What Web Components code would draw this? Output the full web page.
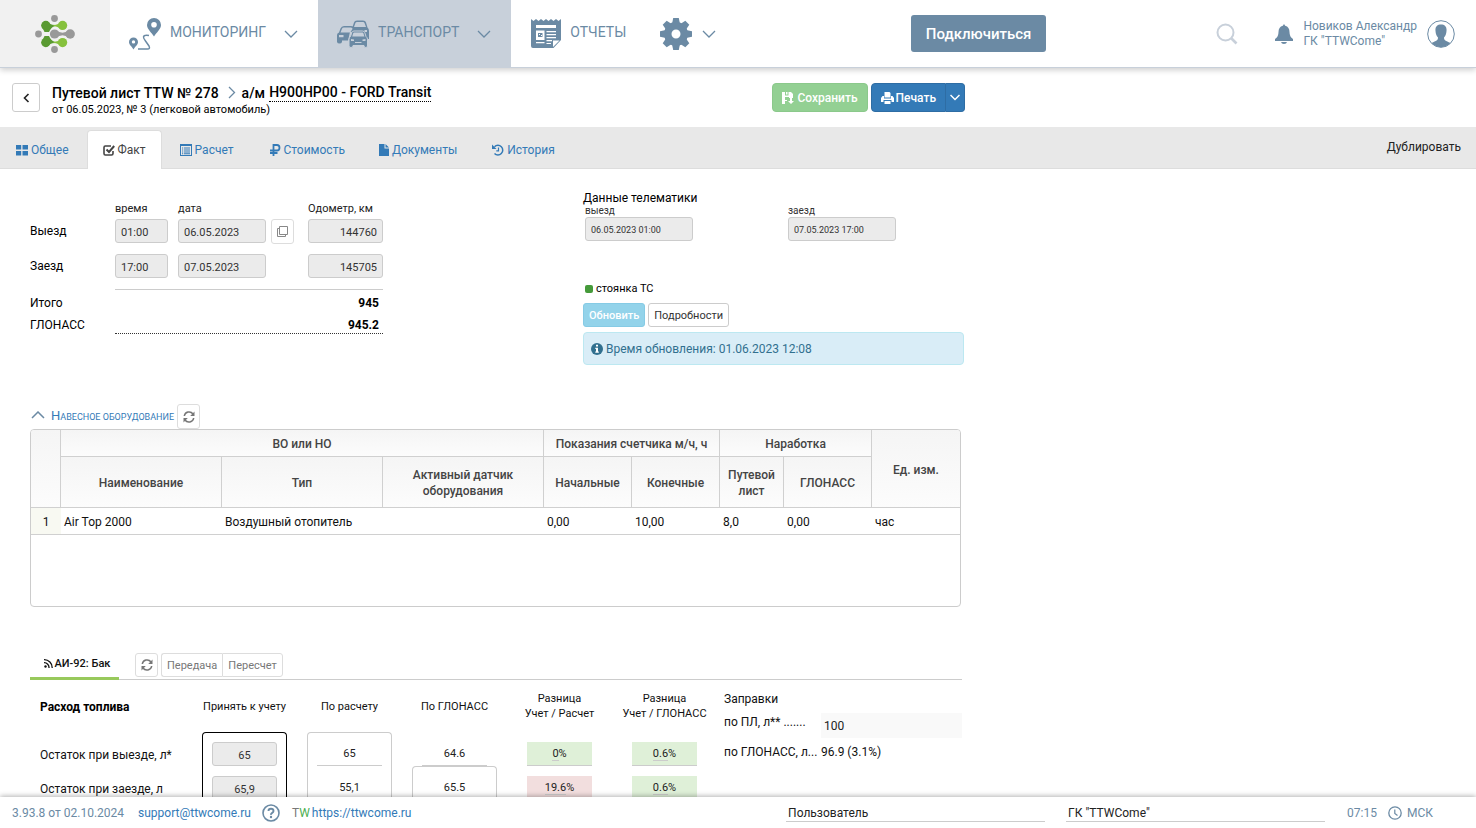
<!DOCTYPE html>
<html lang="ru">
<head>
<meta charset="utf-8">
<title>Путевой лист TTW № 278</title>
<style>
  body { margin: 0; font: 12px/16px Roboto, "Liberation Sans", sans-serif; color: #000; background: #fff; }
</style>
</head>
<body>
<waybill-app></waybill-app>
<script>
const RESET = `
  *, *::before, *::after { box-sizing: border-box; }
  a { color: #337ab7; text-decoration: none; }
  button, input { font: inherit; margin: 0; }
  button { cursor: pointer; }
  input { min-width: 0; }
  .field { height: 24px; width: 100%; padding: 2px 5px 0; border: 1px solid #ccc; border-radius: 3px; background: #ebebeb; color: #333; }
  .btn { display: inline-flex; align-items: center; justify-content: center; height: 24px; padding: 1px 5px 0; border: 1px solid #ccc; border-radius: 3px; background: #fff; color: #333; white-space: nowrap; }
  .soft { border-color: #ddd; color: #777; }
`;

const define = (name, css, html) => {
  const template = document.createElement('template');
  template.innerHTML = `<style>${RESET}${css}</style>${html}`;
  customElements.define(name, class extends HTMLElement {
    constructor() {
      super();
      this.attachShadow({ mode: 'open' }).append(template.content.cloneNode(true));
    }
  });
};

/* name: [width, height, viewBox, markup] */
const ICONS = {
  logo: [40, 38, '0 0 40 38', `
    <g fill="#999"><circle cx="19.500" cy="3.500" r="3.400"/><circle cx="3.500" cy="19" r="3.400"/><circle cx="19.500" cy="34.500" r="3.400"/>
    <circle cx="19.500" cy="19" r="4.600"/><circle cx="35.200" cy="19" r="4.700"/><path d="M21 14.800q6.500 6 13 0v8.400q-6.500-6-13 0z"/></g>
    <g fill="#5a9a32"><circle cx="10.800" cy="10.400" r="4.600"/><circle cx="10.800" cy="27.600" r="4.600"/>
    <path d="M12 6.200q3 3.600 7.500 3.800v1.200q-3.500 1-5.500 5.800h-4.500L6.200 10z"/><path d="M12 31.800q3-3.600 7.500-3.800v-1.200q-3.500-1-5.500-5.800h-4.500L6.200 28z"/></g>
    <g fill="#86c13d"><circle cx="27.600" cy="10.400" r="4.600"/><circle cx="27.600" cy="27.600" r="4.600"/>
    <path d="M26.500 6q-3 4-8 4v1.200q5 0 8 3.600z"/><path d="M26.500 32q-3-4-8-4v-1.200q5 0 8-3.600z"/></g>`],
  route: [32, 32, '0 0 32 32', `<path fill="currentColor" fill-rule="evenodd" d="M25 0a7 7 0 0 1 7 7c0 4-4.500 7.500-7 11.500C22.500 14.500 18 11 18 7a7 7 0 0 1 7-7zm0 4a2.800 2.800 0 1 0 0 5.600A2.800 2.800 0 0 0 25 4z"/>
    <path fill="currentColor" fill-rule="evenodd" d="M4.500 19.500A4.500 4.500 0 0 1 9 24c0 3-3 4.500-4.500 7.500C3 28.500 0 27 0 24a4.500 4.500 0 0 1 4.500-4.500zm0 2.700a1.700 1.700 0 1 0 0 3.400 1.700 1.700 0 0 0 0-3.400z"/>
    <path d="M20 17.500q-5-1-5.500 1.500-.2 1 2 4l3.500 5q1.500 3-1.500 3H9" fill="none" stroke="currentColor" stroke-width="1.500"/>`],
  cars: [32, 28, '0 0 32 28', `
    <g fill="currentColor"><path d="M15 8.500 17 2.500Q17.500.600 20 .500h6q2.500 0 3 2l1.500 5Q32 8.500 32 11v8h-4l-4.500-7H14z"/>
    <path d="M0 22V15q0-2 2-2.500l1.500-4Q4.500 6 7 6h7q3 0 3 2.500l-4 3.500-2 8.500H5V22q-.5 1.500-2.500 1.500T0 22z"/></g>
    <g fill="#c8d0da"><path d="M17 7l1.500-4.200Q18.800 2 20 2h6q1.200 0 1.500 1L29 7z"/><path d="M3.500 12.500 5 8.700Q5.300 7.500 7 7.500h7q1.500 0 1.500 1.500L13 12.500z"/><path d="M2 15h4.500v2.300H2zM27.500 10H30v2h-2.500z"/></g>
    <path d="M12 26v-6.500q0-2 1.500-3l1.200-3.800q.5-1.700 2.300-1.700h8.500q1.800 0 2.300 1.700l1.200 3.800q1.500 1 1.500 3V26q0 1.500-1.700 1.500T27 26v-.5H16V26q0 1.500-2 1.500T12 26z" fill="currentColor" stroke="#c8d0da"/>
    <path d="M15.200 16.500l1-3.200q.2-.8 1-.8h8.200q.8 0 1 .8l1 3.200zM14 19l3 .5v1.500h-3zM28.500 19l-3 .5v1.500h3zM18 22h6.500v1H18z" fill="#c8d0da"/>`],
  news: [30, 29, '0 0 30 29', `<path fill="currentColor" d="M0 0 2.500 2 5 0l2.500 2L10 0l2.500 2L15 0l2.500 2L20 0l2.500 2L25 0l2.500 2L30 0v21l-7.500 8H2q-2 0-2-2z"/>
    <path fill="#fff" d="M5 6h20v3H5zM5 11.500h8.500V21H5zM15.500 12h9.500v1.200h-9.500zM15.500 15h9.500v1.200h-9.500zM15.500 18h9.500v1.200h-9.500zM15.500 21H21v1.200h-5.500zM5 23h8.500v1.200H5zM15.500 24H20v1h-4.500z"/><path fill="#fff" d="M22 28v-6.500h6.500z"/>
    <path fill="currentColor" d="M7 14h4.500v4H7z"/><path fill="#fff" d="M8 15h1v1H8zM10 16h1v1h-1z"/>`],
  gear: [32, 32, '-16 -16 32 32', `<circle r="8.200" fill="none" stroke="currentColor" stroke-width="7.400"/><g fill="currentColor">${[0, 45, 90, 135, 180, 225, 270, 315].map(a => `<path transform="rotate(${a})" d="M-4-10 -2.800-16H2.800L4-10z"/>`).join('')}</g>`],
  down: [14, 8, '0 0 14 8', `<path d="M1 1l6 6 6-6" fill="none" stroke="currentColor" stroke-width="1.300"/>`],
  up: [14, 8, '0 0 14 8', `<path d="M1 7l6-6 6 6" fill="none" stroke="currentColor" stroke-width="1.500"/>`],
  downwhite: [10, 7, '0 0 10 7', `<path d="M.5 1 5 5.500 9.500 1" fill="none" stroke="currentColor" stroke-width="1.500"/>`],
  right: [8, 13, '0 0 8 13', `<path d="M1 1l5.500 5.500L1 12" fill="none" stroke="currentColor" stroke-width="1.300"/>`],
  back: [7, 10, '0 0 7 10', `<path d="M5.500 1 1.500 5l4 4" fill="none" stroke="currentColor" stroke-width="1.600"/>`],
  search: [22, 22, '0 0 22 22', `<circle cx="9.500" cy="9.500" r="8" fill="none" stroke="currentColor" stroke-width="2"/><path d="M15 15l5.500 5.500" stroke="currentColor" stroke-width="2.600"/>`],
  bell: [18, 20, '0 0 18 20', `<path fill="currentColor" d="M9 0l1.200 1.800Q14.500 3 14.500 8q0 5 3.500 7v2H0v-2q3.500-2 3.500-7 0-5 4.300-6.200zM6 18h6q-.5 2-3 2t-3-2z"/>`],
  avatar: [28, 28, '0 0 28 28', `<circle cx="14" cy="14" r="13.300" fill="none" stroke="currentColor"/><path fill="currentColor" d="M14 4.500c4 0 6 2.500 5.500 6.500-.2 3-1 5-2.500 6.500 0 3 1.500 3 6.500 5.500A13 13 0 0 1 4.500 23c5-2.500 6.500-2.500 6.500-5.500C9.500 16 8.700 14 8.500 11 8 7 10 4.500 14 4.500z"/>`],
  save: [12, 12, '0 0 12 12', `<path fill="currentColor" fill-rule="evenodd" d="M0 0h3v3.500h3.500V0H9l2 2v4H7V5H3v3h2v1H3v3H0zM4 0h1.500v2.500H4z"/><path fill="currentColor" d="M8 6h2v3h2l-3 3-3-3h2z"/>`],
  print: [13, 12, '0 0 13 12', `<path fill="currentColor" d="M3.500 0h5L9.500 1v4.500h-6zM1.500 4H3v2.500h7V4h1.500L13 6v4h-2.500V8h-8v2H0V6zM3.500 9h6v3h-6z"/>`],
  grid: [12, 12, '0 0 12 12', `<path fill="currentColor" d="M0 1h5.200v4.500H0zM6.500 1H12v4.500H6.500zM0 7h5.200v4.500H0zM6.500 7H12v4.500H6.500z"/>`],
  check: [12, 12, '0 0 12 12', `<path d="M10 7v2.500q0 1.500-1.500 1.500H2.300Q1 11 1 9.500v-6Q1 2 2.300 2H8" fill="none" stroke="currentColor" stroke-width="1.600"/><path d="M3.500 5.500 6 8l5.200-6" fill="none" stroke="currentColor" stroke-width="2"/>`],
  calc: [12, 12, '0 0 12 12', `<path fill="currentColor" fill-rule="evenodd" d="M0 0h12v12H0zm1 2v9h10V2z"/><path fill="currentColor" d="M2 3.500h1.200v1H2zM4 3.500h6v1H4zM2 5.500h1.200v1H2zM4 5.500h6v1H4zM2 7.500h1.200v1H2zM4 7.500h6v1H4zM2 9.300h1.200v1H2zM4 9.300h6v1H4z"/>`],
  ruble: [13, 12, '-2 0 13 12', `<path d="M3.500 12V1H7q2.500 0 2.500 2.700T7 6.500H0M0 9h7.500" fill="none" stroke="currentColor" stroke-width="1.800"/>`],
  file: [10, 12, '0 0 10 12', `<path fill="currentColor" d="M0 0h5.500v4.500H10V12H0zM6.500 0 10 3.500H6.500z"/>`],
  history: [13, 12, '-1 0 13 12', `<path d="M2.500 2.800A4.800 4.800 0 1 1 2.500 9.500" fill="none" stroke="currentColor" stroke-width="1.500"/><path fill="currentColor" d="M0 .500V5h4.500z"/><path d="M6.500 3.500v3.300H4.300" fill="none" stroke="currentColor" stroke-width="1.200"/>`],
  copy: [11, 11, '0 0 11 11', `<path d="M2.500.500h8v8h-8zM2 2.500H.500v8h8V9" fill="none" stroke="#888"/>`],
  refresh: [12, 12, '0 0 12 12', `<path d="M1.300 5A4.800 4.800 0 0 1 10 3M10.700 7A4.800 4.800 0 0 1 2 9" fill="none" stroke="currentColor" stroke-width="1.500"/><path fill="currentColor" d="M11.500.500V5H7.200zM.500 11.500V7h4.300z"/>`],
  info: [12, 12, '0 0 12 12', `<circle cx="6" cy="6" r="6" fill="currentColor"/><path fill="#fff" d="M5 1.800h2v1.800H5zM4.300 4.700H7v3.800h.8v1.200H4.300V8.500H5V5.900h-.7z"/>`],
  feed: [9, 9, '0 0 9 9', `<circle cx="1.500" cy="7.500" r="1.200" fill="currentColor"/><path d="M0 3.700A4.800 4.800 0 0 1 5 9M0 .700A8 8 0 0 1 8.200 9" fill="none" stroke="currentColor" stroke-width="1.300"/>`],
  help: [18, 18, '0 0 18 18', `<circle cx="9" cy="9" r="8" fill="none" stroke="currentColor" stroke-width="1.600"/><path d="M6.500 7Q6.500 4.700 9 4.700T11.500 7q0 1.200-1.300 1.900T9 10.800" fill="none" stroke="currentColor" stroke-width="1.900"/><circle cx="9" cy="13" r="1.200" fill="currentColor"/>`],
  clock: [14, 14, '0 0 14 14', `<circle cx="7" cy="7" r="6.200" fill="none" stroke="currentColor" stroke-width="1.300"/><path d="M6.800 3.500v4l2.700 2" fill="none" stroke="currentColor" stroke-width="1.200"/>`]
};

customElements.define('ui-icon', class extends HTMLElement {
  connectedCallback() {
    if (this.shadowRoot) return;
    const [w, h, box, body] = ICONS[this.getAttribute('name')];
    this.attachShadow({ mode: 'open' }).innerHTML =
      `<style>:host{display:inline-block;flex:none;line-height:0}svg{display:block}</style>
       <svg width="${w}" height="${h}" viewBox="${box}" aria-hidden="true">${body}</svg>`;
  }
});

define('nav-item', `
  :host { display: flex; }
  a { display: flex; align-items: center; padding: 0 20px 0 19px; color: #6b8aa4; font-size: 14px; }
  :host([active]) a { background: #c8d0da; }
  span { padding: 0 18px 4px 9px; }
  :host([last]) a { padding-left: 20px; }
  :host([last]) span { padding-right: 0; }
  :host([bare]) a { gap: 10px; padding-left: 14px; }
  :host([bare]) span { display: none; }
`, `<a href="#"><slot name="icon"></slot><span><slot></slot></span><slot name="arrow"></slot></a>`);

define('top-bar', `
  :host { display: flex; height: 68px; border-bottom: 1px solid #c8d0da; background: #fff; box-shadow: 0 2px 6px rgba(0,0,0,.2); color: #6b8aa4; position: relative; z-index: 2; }
  .logo { display: grid; place-items: center; width: 110px; background: #f1f1f1; }
  nav { display: flex; }
  .tools { display: flex; align-items: center; margin-left: auto; padding-right: 21px; }
  .connect { height: 37px; padding: 0 15px; margin-right: 170px; border: 0; border-radius: 3px; background: #6b8aa4; color: #fff; font-size: 15px; font-weight: 500; }
  .plain { display: flex; padding: 0; border: 0; background: none; color: #c8d0da; }
  .bell { color: #6b8aa4; margin: 0 10px 0 37px; }
  .user { display: flex; align-items: center; gap: 10px; color: #6b8aa4; line-height: 15px; }
`, `
  <a class="logo" href="#" aria-label="TTW"><ui-icon name="logo"></ui-icon></a>
  <nav>
    <nav-item><ui-icon slot="icon" name="route"></ui-icon>МОНИТОРИНГ<ui-icon slot="arrow" name="down"></ui-icon></nav-item>
    <nav-item active><ui-icon slot="icon" name="cars"></ui-icon>ТРАНСПОРТ<ui-icon slot="arrow" name="down"></ui-icon></nav-item>
    <nav-item last><ui-icon slot="icon" name="news"></ui-icon>ОТЧЕТЫ</nav-item>
    <nav-item bare><ui-icon slot="icon" name="gear"></ui-icon><ui-icon slot="arrow" name="down"></ui-icon></nav-item>
  </nav>
  <div class="tools">
    <button class="connect">Подключиться</button>
    <button class="plain" aria-label="Поиск"><ui-icon name="search"></ui-icon></button>
    <button class="plain bell" aria-label="Уведомления"><ui-icon name="bell"></ui-icon></button>
    <a class="user" href="#"><span>Новиков Александр<br>ГК "TTWCome"</span><ui-icon name="avatar"></ui-icon></a>
  </div>`);

define('page-head', `
  :host { display: flex; align-items: center; gap: 12px; max-width: 965px; height: 59px; padding-left: 12px; }
  .back { width: 28px; height: 29px; color: #222; }
  .text { flex: 1; padding-top: 6px; }
  h1 { display: flex; align-items: center; margin: 0; font-size: 14px; line-height: 18px; font-weight: 500; }
  h1 ui-icon { margin: 0 6px 0 9px; color: #6b8aa4; }
  h1 a { color: #000; border-bottom: 1px dotted #000; margin-left: 4px; }
  p { margin: 0; font-size: 11px; line-height: 16px; }
  .act { display: flex; align-items: center; height: 29px; gap: 3px; padding: 0 9px; border: 1px solid #2e6da4; background: #337ab7; color: #fff; font-weight: 500; }
  .save { border-color: #8bc98b; border-radius: 4px; background: #93d093; margin-right: 3px; }
  .print { border-radius: 4px 0 0 4px; gap: 2px; }
  .more { border-radius: 0 4px 4px 0; padding: 0 4px; border-left: 0; }
  .group { display: flex; }
`, `
  <button class="btn back" aria-label="Назад"><ui-icon name="back"></ui-icon></button>
  <div class="text">
    <h1>Путевой лист TTW № 278<ui-icon name="right"></ui-icon>а/м <a href="#">Н900НР00 - FORD Transit</a></h1>
    <p>от 06.05.2023, № 3 (легковой автомобиль)</p>
  </div>
  <div class="group">
    <button class="act save"><ui-icon name="save"></ui-icon>Сохранить</button>
    <button class="act print"><ui-icon name="print"></ui-icon>Печать</button>
    <button class="act more" aria-label="Варианты печати"><ui-icon name="downwhite"></ui-icon></button>
  </div>`);

define('tab-item', `
  :host { display: block; margin-right: 2px; }
  a { display: flex; align-items: center; gap: 3px; height: 39px; padding: 0 15px; border: 1px solid transparent; border-bottom: 0; border-radius: 4px 4px 0 0; }
  :host([active]) a { background: #fff; border-color: #ddd; color: #444; }
`, `<a href="#"><slot></slot></a>`);

define('tab-bar', `
  :host { display: flex; align-items: flex-end; height: 42px; background: linear-gradient(#ddd, #ddd) bottom / 100% 1px no-repeat #e8e8e8; }
  nav { display: flex; flex: 1; }
  .copy { align-self: center; margin: 0 15px 2px; color: #222; }
`, `
  <nav>
    <tab-item><ui-icon name="grid"></ui-icon>Общее</tab-item>
    <tab-item active><ui-icon name="check"></ui-icon>Факт</tab-item>
    <tab-item><ui-icon name="calc"></ui-icon>Расчет</tab-item>
    <tab-item><ui-icon name="ruble"></ui-icon>Стоимость</tab-item>
    <tab-item><ui-icon name="file"></ui-icon>Документы</tab-item>
    <tab-item><ui-icon name="history"></ui-icon>История</tab-item>
  </nav>
  <a class="copy" href="#">Дублировать</a>`);

define('trip-form', `
  :host { display: grid; grid-template-columns: 75px 53px 88px 22px 75px; column-gap: 10px; width: 353px; align-items: start; align-content: start; }
  .cap { font-size: 11px; line-height: 12px; padding-bottom: 4px; color: #222; white-space: nowrap; }
  .c1 { grid-column: 1; line-height: 24px; }
  .c2 { grid-column: 2; } .c3 { grid-column: 3; } .c5 { grid-column: 5; }
  .field { font-size: 11px; }
  .num { text-align: right; }
  .copy { width: 23px; height: 25px; padding: 0; margin-left: -5px; }
  .second { margin-top: 10px; }
  .total, .glonass { grid-column: 2 / -1; text-align: right; padding-right: 4px; font-weight: 700; }
  .total { margin-top: 11px; padding-top: 5px; border-top: 1px solid #ccc; }
  .lab { margin-top: 17px; }
  .glab { margin-top: 6px; }
  .glonass { margin-top: 6px; border-bottom: 1px dotted #333; }
`, `
  <label class="cap c2" for="t1">время</label><label class="cap c3" for="d1">дата</label><label class="cap c5" for="o1">Одометр, км</label>
  <span class="c1">Выезд</span>
  <input class="field c2" id="t1" value="01:00"><input class="field c3" id="d1" value="06.05.2023">
  <button class="btn soft copy" aria-label="Копировать"><ui-icon name="copy"></ui-icon></button>
  <input class="field num c5" id="o1" value="144760">
  <span class="c1 second">Заезд</span>
  <input class="field c2 second" aria-label="Время заезда" value="17:00"><input class="field c3 second" aria-label="Дата заезда" value="07.05.2023">
  <input class="field num c5 second" aria-label="Одометр при заезде" value="145705">
  <span class="lab">Итого</span><span class="total">945</span>
  <span class="glab">ГЛОНАСС</span><span class="glonass">945.2</span>`);

define('telematics-panel', `
  :host { display: block; width: 381px; }
  h2 { margin: 0; font-size: 12px; line-height: 14px; font-weight: 400; }
  .pair { display: flex; gap: 95px; padding-left: 2px; }
  label { display: block; font-size: 10px; line-height: 12px; color: #333; }
  .field { width: 108px; font-size: 9px; display: block; }
  .state { display: flex; align-items: center; gap: 3px; padding-left: 2px; margin: 40px 0 6px; font-size: 11px; }
  .dot { width: 8px; height: 8px; border-radius: 2px; background: #459a3a; }
  .row { display: flex; gap: 3px; }
  .btn { font-size: 11px; }
  .update { background: #93d3ea; border-color: #86cbe5; color: #fff; font-weight: 500; }
  .alert { display: flex; align-items: center; gap: 3px; margin-top: 5px; height: 33px; padding: 0 7px; border: 1px solid #bce8f1; border-radius: 4px; background: #d9edf7; color: #31708f; }
`, `
  <h2>Данные телематики</h2>
  <div class="pair">
    <div><label for="out">выезд</label><input class="field" id="out" value="06.05.2023 01:00"></div>
    <div><label for="in">заезд</label><input class="field" id="in" value="07.05.2023 17:00"></div>
  </div>
  <div class="state"><span class="dot"></span>стоянка ТС</div>
  <div class="row"><button class="btn update">Обновить</button><button class="btn">Подробности</button></div>
  <div class="alert"><ui-icon name="info"></ui-icon>Время обновления: 01.06.2023 12:08</div>`);

define('equipment-panel', `
  :host { display: block; }
  .head { display: flex; align-items: center; height: 25px; gap: 5px; color: #6b8aa4; }
  .head ui-icon[name="up"] { margin: 0 1px 4px; }
  .head a { text-transform: uppercase; font-size: 9px; line-height: 16px; white-space: nowrap; }
  .head a::first-letter { font-size: 13px; }
  .head .btn { width: 23px; height: 25px; padding: 0; margin-left: -2px; }
  .frame { min-height: 178px; border: 1px solid #ccc; border-radius: 4px; overflow: hidden; }
  table { width: 100%; border-collapse: separate; border-spacing: 0; table-layout: fixed; }
  th { padding: 2px 4px 0; border: solid #d0d0d0; border-width: 0 1px 1px 0; background: linear-gradient(#f5f5f5, #fcfcfc); color: #444; font-weight: 500; }
  th.end { border-right: 0; }
  .r1 th { height: 27px; } .r2 th { height: 51px; }
  td { height: 27px; padding: 2px 3px 0; border-bottom: 1px solid #d0d0d0; color: #111; }
  td:first-child { text-align: center; background: #f8f9f2; }
`, `
  <div class="head"><ui-icon name="up"></ui-icon><a href="#">Навесное оборудование</a><button class="btn soft" aria-label="Обновить список"><ui-icon name="refresh"></ui-icon></button></div>
  <div class="frame"><table>
    <colgroup><col style="width:30px"><col style="width:161px"><col style="width:161px"><col style="width:161px"><col style="width:88px"><col style="width:88px"><col style="width:64px"><col style="width:88px"><col></colgroup>
    <thead>
      <tr class="r1"><th rowspan="2"></th><th colspan="3">ВО или НО</th><th colspan="2">Показания счетчика м/ч, ч</th><th colspan="2">Наработка</th><th rowspan="2" class="end">Ед. изм.</th></tr>
      <tr class="r2"><th>Наименование</th><th>Тип</th><th>Активный датчик оборудования</th><th>Начальные</th><th>Конечные</th><th>Путевой лист</th><th>ГЛОНАСС</th></tr>
    </thead>
    <tbody><tr><td>1</td><td>Air Top 2000</td><td>Воздушный отопитель</td><td></td><td>0,00</td><td>10,00</td><td>8,0</td><td>0,00</td><td>час</td></tr></tbody>
  </table></div>`);

define('fuel-panel', `
  :host { display: block; }
  .bar { display: flex; align-items: flex-start; height: 27px; background: linear-gradient(#ccc, #ccc) bottom / 100% 1px no-repeat; }
  .tab { display: flex; align-items: center; gap: 2px; width: 89px; height: 27px; justify-content: center; padding: 0 0 3px 5px; border-bottom: 3px solid #98c95c; color: #111; font-size: 11px; font-weight: 500; margin-right: 16px; }
  .btn { font-size: 11px; }
  .sq { width: 23px; padding: 0; margin-right: 3px; }
  .l { border-radius: 3px 0 0 3px; border-right: 0; } .r { border-radius: 0 3px 3px 0; }
  .body { display: flex; margin-left: -10px; }
  table { flex: none; border-collapse: separate; border-spacing: 20px 0; table-layout: fixed; width: 707px; margin-right: -3px; }
  th { height: 52px; padding: 0; font-weight: 400; font-size: 11px; line-height: 15px; white-space: nowrap; color: #111; }
  th div { display: flex; justify-content: center; }
  th:first-child { text-align: left; font-size: 12px; font-weight: 700; color: #000; padding-top: 2px; }
  td { height: 34px; padding: 10px 9px 0; vertical-align: top; text-align: center; font-size: 11px; color: #222; border: 0 solid #ccc; }
  td:first-child { padding: 15px 0 0; text-align: left; font-size: 12px; line-height: 16px; white-space: nowrap; color: #111; }
  td.take { border-color: #000; border-width: 0 1px; }
  td.calc { border-width: 0 1px; }
  .first td.take, .first td.calc { border-top-width: 1px; border-radius: 4px 4px 0 0; padding-top: 9px; }
  td.sat { padding: 10px 10px 0; }
  .next td.sat { border-width: 1px 1px 0; border-radius: 4px 4px 0 0; padding: 9px 9px 0; }
  td.diff { padding: 10px 10px 0; }
  .field { text-align: center; display: block; }
  .val { display: block; height: 24px; line-height: 23px; border-bottom: 1px solid #ccc; }
  .next .val { border-color: transparent; }
  .good { background: #dff0d8; } .bad { background: #f2dede; }
  .val u { text-decoration: none; border-bottom: 1px solid #ccc; }
  .sum { flex: 1; display: grid; grid-template-columns: 97px 1fr; align-content: start; padding-top: 11px; color: #111; }
  .sum h3 { grid-column: 1 / -1; margin: 0; font-size: 12px; line-height: 16px; font-weight: 400; }
  .sum label { padding-top: 7px; }
  .sum input { height: 25px; margin-top: 6px; border: 0; background: #f9f9f9; padding: 1px 3px 0; color: #222; width: 100%; }
  .sum .g { padding-top: 6px; white-space: nowrap; }
`, `
  <div class="bar">
    <a class="tab" href="#"><ui-icon name="feed"></ui-icon>АИ-92: Бак</a>
    <button class="btn soft sq" aria-label="Обновить топливо"><ui-icon name="refresh"></ui-icon></button><button class="btn soft l">Передача</button><button class="btn soft r">Пересчет</button>
  </div>
  <div class="body">
    <table>
      <colgroup><col style="width:142px"><col><col><col><col><col></colgroup>
      <thead><tr><th>Расход топлива</th><th>Принять к учету</th><th>По расчету</th><th>По ГЛОНАСС</th><th><div>Разница<br>Учет / Расчет</div></th><th><div>Разница<br>Учет / ГЛОНАСС</div></th></tr></thead>
      <tbody>
        <tr class="first"><td>Остаток при выезде, л*</td><td class="take"><input class="field" aria-label="Остаток при выезде" value="65"></td><td class="calc"><span class="val">65</span></td><td class="sat"><span class="val">64.6</span></td><td class="diff"><span class="val good"><u>0</u>%</span></td><td class="diff"><span class="val good"><u>0.6</u>%</span></td></tr>
        <tr class="next"><td>Остаток при заезде, л</td><td class="take"><input class="field" aria-label="Остаток при заезде" value="65,9"></td><td class="calc"><span class="val">55,1</span></td><td class="sat"><span class="val">65.5</span></td><td class="diff"><span class="val bad"><u>19.6</u>%</span></td><td class="diff"><span class="val good"><u>0.6</u>%</span></td></tr>
      </tbody>
    </table>
    <div class="sum">
      <h3>Заправки</h3>
      <label for="pl">по ПЛ, л** .......</label><input id="pl" value="100">
      <span class="g">по ГЛОНАСС, л...</span><span class="g">96.9 (3.1%)</span>
    </div>
  </div>`);

define('status-bar', `
  :host { display: flex; align-items: center; height: 31px; padding: 0 43px 0 12px; background: #fff; box-shadow: 0 -1px 5px rgba(0,0,0,.3); color: #6b8aa4; position: relative; z-index: 2; }
  .links { display: flex; align-items: center; flex: 1; }
  .mail { margin: 0 11px 0 14px; }
  .help { color: #6b8aa4; margin-right: 12px; display: flex; }
  .links b { font-weight: 400; color: #4caf50; } .links i { font-style: normal; color: #777; }
  .site { margin-left: 2px; }
  input { width: 259px; height: 18px; padding: 1px 2px 0; border: 0; border-bottom: 1px solid #ccc; color: #222; background: none; margin-right: 21px; }
  .time { margin: 0 11px 0 1px; }
  .zone { display: flex; align-items: center; gap: 5px; }
`, `
  <div class="links">3.93.8 от 02.10.2024<a class="mail" href="#">support@ttwcome.ru</a><a class="help" href="#" aria-label="Справка"><ui-icon name="help"></ui-icon></a><span><i>T</i><b>W</b></span><a class="site" href="#">https://ttwcome.ru</a></div>
  <input aria-label="Роль" value="Пользователь"><input aria-label="Организация" value='ГК "TTWCome"'>
  <span class="time">07:15</span><span class="zone"><ui-icon name="clock"></ui-icon>МСК</span>`);

define('waybill-app', `
  :host { display: flex; flex-direction: column; height: 100vh; }
  main { flex: 1; min-height: 0; overflow: auto; scrollbar-width: none; padding: 22px 30px 0; }
  .top { display: grid; grid-template-columns: 353px 381px; column-gap: 200px; height: 213px; }
  .top trip-form { padding-top: 12px; }
  equipment-panel { max-width: 931px; }
  fuel-panel { max-width: 932px; margin-top: 46px; padding-bottom: 40px; }
`, `
  <top-bar></top-bar>
  <page-head></page-head>
  <tab-bar></tab-bar>
  <main>
    <div class="top"><trip-form></trip-form><telematics-panel></telematics-panel></div>
    <equipment-panel></equipment-panel>
    <fuel-panel></fuel-panel>
  </main>
  <status-bar></status-bar>`);
</script>
</body>
</html>
